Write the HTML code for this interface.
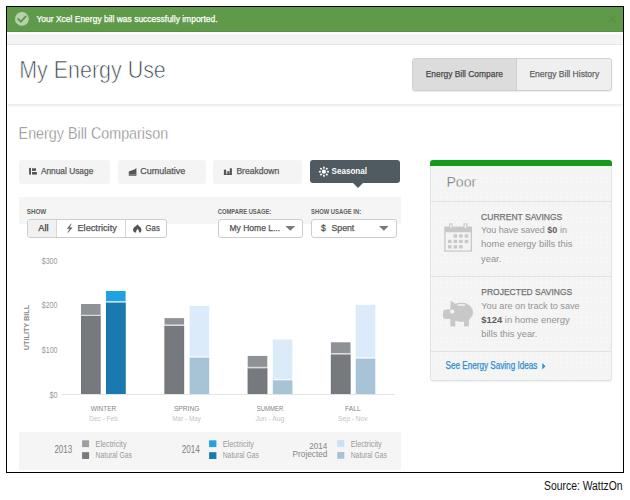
<!DOCTYPE html>
<html><head><meta charset="utf-8"><style>
html,body{margin:0;padding:0;background:#fff;}
body{width:630px;height:500px;position:relative;overflow:hidden;font-family:'Liberation Sans', sans-serif;}
.a{position:absolute;box-sizing:border-box;}
svg text{font-family:'Liberation Sans', sans-serif;}
</style></head><body>
<div class="a" style="left:6px;top:6px;width:618px;height:467px;border:1px solid #000;"></div>
<div class="a" style="left:7px;top:7px;width:616px;height:25px;background:#5f9a4b;"></div>
<svg class="a" style="left:0;top:0;" width="630" height="40">
 <circle cx="21.9" cy="18.9" r="6.9" fill="rgba(255,255,255,0.55)"/>
 <path d="M18.3 19.2 L20.9 21.7 L25.6 16.6" fill="none" stroke="#5f9a4b" stroke-width="1.9" stroke-linecap="square"/>
 <path d="M609.3 15.5 L615.8 22.2 M615.8 15.5 L609.3 22.2" stroke="#58924a" stroke-width="1.5"/>
</svg>
<div class="a" style="left:7px;top:31px;width:616px;height:1px;background:#578f44;"></div>
<div class="a" style="left:7px;top:34px;width:616px;height:11px;background:#f4f4f4;border-bottom:1px solid #e6e6e6;"></div>
<div class="a" style="left:8px;top:104px;width:614px;height:1px;background:#eaeded;"></div>
<div class="a" style="left:8px;top:105px;width:614px;height:2px;background:#f6f6f6;"></div>
<!-- tab group -->
<div class="a" style="left:412px;top:58px;width:200px;height:33px;border:1px solid #d0d0d0;border-radius:3px;background:#efefef;overflow:hidden;box-shadow:0 1px 1px rgba(0,0,0,0.08);">
  <div class="a" style="left:0;top:0;width:104px;height:31px;background:#dcdcdc;border-right:1px solid #cfcfcf;"></div>
</div>
<!-- tab buttons -->
<div class="a" style="left:19px;top:160px;width:91px;height:24px;background:#f4f4f4;border-radius:3px;"></div>
<div class="a" style="left:118px;top:160px;width:88px;height:24px;background:#f4f4f4;border-radius:3px;"></div>
<div class="a" style="left:213px;top:160px;width:89px;height:24px;background:#f4f4f4;border-radius:3px;"></div>
<div class="a" style="left:310px;top:160px;width:90px;height:23px;background:#4f5a61;border-radius:3px;"></div>
<div class="a" style="left:352.6px;top:183px;width:0;height:0;border-left:5px solid transparent;border-right:5px solid transparent;border-top:5px solid #4f5a61;"></div>
<svg class="a" style="left:0;top:0;" width="420" height="200">
 <g fill="#555">
  <rect x="29.1" y="167.9" width="1.9" height="6.7"/>
  <rect x="32" y="168.3" width="4" height="2.6"/>
  <rect x="32" y="172" width="4.9" height="2.6"/>
  <path d="M128.8 175.8 V171.6 C130 170.8 131.5 170.5 133 170 C134.3 169.5 135.3 168.8 136.4 167.9 V175.8 Z"/>
  <rect x="223.9" y="169.7" width="2.3" height="5.2"/>
  <rect x="227.3" y="171.2" width="2.2" height="3.7"/>
  <rect x="229.8" y="168.3" width="2.1" height="6.6"/>
  <rect x="223.9" y="173.8" width="8" height="1.1"/>
 </g>
 <rect x="128.8" y="174" width="7.6" height="0.6" fill="#999"/>
 <g fill="#fff">
  <circle cx="323.9" cy="171.7" r="2.1"/>
  <g transform="translate(323.9 171.7)"><rect x="-0.85" y="-5" width="1.7" height="1.9" transform="rotate(0)"/><rect x="-0.85" y="-5" width="1.7" height="1.9" transform="rotate(45)"/><rect x="-0.85" y="-5" width="1.7" height="1.9" transform="rotate(90)"/><rect x="-0.85" y="-5" width="1.7" height="1.9" transform="rotate(135)"/><rect x="-0.85" y="-5" width="1.7" height="1.9" transform="rotate(180)"/><rect x="-0.85" y="-5" width="1.7" height="1.9" transform="rotate(225)"/><rect x="-0.85" y="-5" width="1.7" height="1.9" transform="rotate(270)"/><rect x="-0.85" y="-5" width="1.7" height="1.9" transform="rotate(315)"/></g>
 </g>
</svg>
<!-- filter panel -->
<div class="a" style="left:19px;top:197px;width:382px;height:27px;background:#f5f5f5;"></div>
<div class="a" style="left:27px;top:219px;width:140px;height:19px;border:1px solid #cdcdcd;border-radius:3px;background:#fff;overflow:hidden;">
  <div class="a" style="left:0;top:0;width:29px;height:17px;background:#f1f1f1;border-right:1px solid #d6d6d6;"></div>
  <div class="a" style="left:96.5px;top:0;width:1px;height:17px;background:#d6d6d6;"></div>
</div>
<div class="a" style="left:218px;top:219px;width:85px;height:19px;border:1px solid #cdcdcd;border-radius:3px;background:#fff;"></div>
<div class="a" style="left:311px;top:219px;width:86px;height:19px;border:1px solid #cdcdcd;border-radius:3px;background:#fff;"></div>
<svg class="a" style="left:0;top:215px;" width="420" height="25">
 <path d="M285.4 11 H295.2 L290.3 15.7 Z M379 11 H388.6 L383.8 15.7 Z" fill="#7a7a7a"/>
 <path d="M71.2 223.8 L67.3 228.6 L70 228.6 L67.9 232.6 L72.1 227.8 L69.4 227.8 Z" transform="translate(0 -215)" fill="#555" stroke="#555" stroke-width="0.4" stroke-linejoin="round"/>
 <path d="M137.3 224.1 C137.5 226 133.1 226.8 133.1 229.9 C133.1 231.2 133.8 232 134.9 232.4 L136.2 232.4 C136 231.1 136.5 229.9 137.6 228.9 C138.7 229.9 139.2 231.1 139 232.4 L140.1 232.4 C141 231.9 141.4 231.1 141.4 229.9 C141.4 227.2 138.4 226.3 137.3 224.1 Z" transform="translate(0 -215)" fill="#555"/>
</svg>
<!-- chart -->
<div class="a" style="left:62px;top:394px;width:333px;height:1px;background:#e3e3e3;"></div>
<svg class="a" style="left:0;top:0;" width="420" height="400">
<rect x="81" y="304" width="19.6" height="10.9" fill="#8e9196"/>
<rect x="81" y="314.9" width="19.6" height="1.1" fill="#d9dadb"/>
<rect x="81" y="316.0" width="19.6" height="78.0" fill="#76797e"/>
<rect x="81" y="316.0" width="0.8" height="78.0" fill="#6f7277" opacity="0.6"/>
<rect x="99.8" y="316.0" width="0.8" height="78.0" fill="#6f7277" opacity="0.6"/>
<rect x="106" y="291" width="19.6" height="10.2" fill="#1fa2e2"/>
<rect x="106" y="301.2" width="19.6" height="1.4" fill="#c2def0"/>
<rect x="106" y="302.6" width="19.6" height="91.4" fill="#1a79b0"/>
<rect x="106" y="302.6" width="0.8" height="91.4" fill="#176ea1" opacity="0.6"/>
<rect x="124.8" y="302.6" width="0.8" height="91.4" fill="#176ea1" opacity="0.6"/>
<rect x="164.5" y="318.1" width="19.6" height="6.6" fill="#8e9196"/>
<rect x="164.5" y="324.7" width="19.6" height="1.3" fill="#d9dadb"/>
<rect x="164.5" y="326.0" width="19.6" height="68.0" fill="#76797e"/>
<rect x="164.5" y="326.0" width="0.8" height="68.0" fill="#6f7277" opacity="0.6"/>
<rect x="183.3" y="326.0" width="0.8" height="68.0" fill="#6f7277" opacity="0.6"/>
<rect x="189.6" y="305.9" width="19.6" height="50.5" fill="#dcebfa"/>
<rect x="189.6" y="356.4" width="19.6" height="1.2" fill="#f4f8fb"/>
<rect x="189.6" y="357.6" width="19.6" height="36.4" fill="#a6c4d6"/>
<rect x="247.7" y="355.9" width="19.6" height="11.0" fill="#8e9196"/>
<rect x="247.7" y="366.9" width="19.6" height="1.4" fill="#d9dadb"/>
<rect x="247.7" y="368.3" width="19.6" height="25.7" fill="#76797e"/>
<rect x="247.7" y="368.3" width="0.8" height="25.7" fill="#6f7277" opacity="0.6"/>
<rect x="266.5" y="368.3" width="0.8" height="25.7" fill="#6f7277" opacity="0.6"/>
<rect x="272.8" y="339.5" width="19.6" height="39.6" fill="#dcebfa"/>
<rect x="272.8" y="379.1" width="19.6" height="1.2" fill="#f4f8fb"/>
<rect x="272.8" y="380.3" width="19.6" height="13.7" fill="#a6c4d6"/>
<rect x="330.9" y="342.3" width="19.6" height="10.9" fill="#8e9196"/>
<rect x="330.9" y="353.2" width="19.6" height="1.3" fill="#d9dadb"/>
<rect x="330.9" y="354.5" width="19.6" height="39.5" fill="#76797e"/>
<rect x="330.9" y="354.5" width="0.8" height="39.5" fill="#6f7277" opacity="0.6"/>
<rect x="349.7" y="354.5" width="0.8" height="39.5" fill="#6f7277" opacity="0.6"/>
<rect x="355.7" y="304.9" width="19.6" height="52.5" fill="#dcebfa"/>
<rect x="355.7" y="357.4" width="19.6" height="1.2" fill="#f4f8fb"/>
<rect x="355.7" y="358.6" width="19.6" height="35.4" fill="#a6c4d6"/>
</svg>

<!-- legend -->
<div class="a" style="left:19px;top:432px;width:382px;height:38px;background:#f5f5f5;"></div>
<svg class="a" style="left:0;top:430px;" width="420" height="40">
 <rect x="82.1" y="10.3" width="7" height="6.8" fill="#9a9da1"/>
 <rect x="82.1" y="22.2" width="7" height="6.8" fill="#76797e"/>
 <rect x="209.1" y="10.3" width="7.3" height="6.8" fill="#1fa2e2"/>
 <rect x="209.1" y="22.2" width="7.3" height="6.8" fill="#1a79b0"/>
 <rect x="337.2" y="10.1" width="7.1" height="6.8" fill="#c9e2f5"/>
 <rect x="337.2" y="22" width="7.1" height="6.8" fill="#a6c4d6"/>
</svg>
<!-- sidebar -->
<div class="a" style="left:430px;top:160px;width:182px;height:221px;background:#f4f4f4;border:1px solid #e2e2e2;border-radius:3px;box-shadow:0 1px 1px rgba(0,0,0,0.06);"></div>
<div class="a" style="left:430px;top:160px;width:182px;height:5.5px;background:#169a1c;border-radius:3px 3px 0 0;"></div>
<div class="a" style="left:431px;top:201px;width:180px;height:1px;background:#e3e3e3;"></div>
<div class="a" style="left:431px;top:275.5px;width:180px;height:1px;background:#e3e3e3;"></div>
<div class="a" style="left:431px;top:351px;width:180px;height:1px;background:#e3e3e3;"></div>
<svg class="a" style="left:0;top:0;" width="630" height="500">
 <defs><pattern id="dots" x="0" y="0" width="5" height="5" patternUnits="userSpaceOnUse"><rect x="1" y="2" width="1" height="1" fill="#fff" opacity="0.85"/></pattern></defs>
 <rect x="431" y="166" width="180" height="214" fill="url(#dots)"/>
</svg>
<svg class="a" style="left:430px;top:200px;" width="182" height="180">
 <g fill="#c8c8c8">
  <rect x="14.3" y="26.6" width="27.7" height="25.1"/>
  <rect x="19.2" y="23.4" width="3.4" height="5"/>
  <rect x="33.4" y="23.4" width="4.1" height="5"/>
 </g>
 <rect x="15.6" y="32.3" width="25.1" height="18.2" fill="#f4f4f4"/>
 <rect x="20.2" y="24.4" width="1.4" height="3.5" fill="#f4f4f4"/>
 <rect x="34.6" y="24.4" width="1.6" height="3.5" fill="#f4f4f4"/>
 <g fill="#c8c8c8">
  <rect x="23.6" y="34.3" width="3.6" height="3.3"/><rect x="29.1" y="34.3" width="3.6" height="3.3"/><rect x="34.7" y="34.3" width="3.6" height="3.3"/><rect x="18.0" y="39.8" width="3.6" height="3.3"/><rect x="23.6" y="39.8" width="3.6" height="3.3"/><rect x="29.1" y="39.8" width="3.6" height="3.3"/><rect x="34.7" y="39.8" width="3.6" height="3.3"/><rect x="18.0" y="45.2" width="3.6" height="3.3"/><rect x="23.6" y="45.2" width="3.6" height="3.3"/><rect x="29.1" y="45.2" width="3.6" height="3.3"/>
 </g>
 <g fill="#c8c8c8">
  <path d="M20.2 109.5 L20.9 100.8 L26.6 104.6 Z"/>
  <ellipse cx="31.3" cy="112.3" rx="11.7" ry="9.7"/>
  <rect x="13" y="109.6" width="10" height="9.4" rx="3"/>
  <path d="M20.4 117 H25.3 V125.4 Q25.3 126.4 24.3 126.4 H21.4 Q20.4 126.4 20.4 125.4 Z"/>
  <path d="M34 117 H38.9 V125.4 Q38.9 126.4 37.9 126.4 H35 Q34 126.4 34 125.4 Z"/>
 </g>
 <circle cx="22.2" cy="111.6" r="2.1" fill="#f4f4f4"/>
 <path d="M27.6 105.3 Q31.2 104.1 35 105.3" stroke="#f4f4f4" stroke-width="1.5" fill="none"/>
 <path d="M112.3 163 L115.5 166.2 L112.3 169.4 Z" fill="#2a8fcf"/>
</svg>

<svg class="a" style="left:0;top:0" width="630" height="500">
<text x="36.4" y="22" font-size="9.3" stroke="#ffffff" stroke-width="0.25" fill="#ffffff" textLength="181.2" lengthAdjust="spacingAndGlyphs">Your Xcel Energy bill was successfully imported.</text>
<text x="19.2" y="78" font-size="24.3" stroke="#fff" stroke-width="0.7" fill="#3a444c" textLength="146.6" lengthAdjust="spacingAndGlyphs">My Energy Use</text>
<text x="425.7" y="77" font-size="9.4" stroke="#474747" stroke-width="0.25" fill="#474747" textLength="77.2" lengthAdjust="spacingAndGlyphs">Energy Bill Compare</text>
<text x="529.4" y="77" font-size="9.4" stroke="#5f6469" stroke-width="0.25" fill="#5f6469" textLength="69.8" lengthAdjust="spacingAndGlyphs">Energy Bill History</text>
<text x="18.6" y="139" font-size="16.8" stroke="#fff" stroke-width="0.45" fill="#777777" textLength="149.5" lengthAdjust="spacingAndGlyphs">Energy Bill Comparison</text>
<text x="40.9" y="174" font-size="8.2" stroke="#5a5a5a" stroke-width="0.25" fill="#5a5a5a" textLength="52.4" lengthAdjust="spacingAndGlyphs">Annual Usage</text>
<text x="140.2" y="174" font-size="8.2" stroke="#5a5a5a" stroke-width="0.25" fill="#5a5a5a" textLength="45.1" lengthAdjust="spacingAndGlyphs">Cumulative</text>
<text x="236.4" y="174" font-size="8.2" stroke="#5a5a5a" stroke-width="0.25" fill="#5a5a5a" textLength="42.9" lengthAdjust="spacingAndGlyphs">Breakdown</text>
<text x="331.5" y="174" font-size="8.2" font-weight="700" fill="#fff" textLength="35.5" lengthAdjust="spacingAndGlyphs">Seasonal</text>
<text x="26.7" y="214" font-size="7" font-weight="700" fill="#5f5f5f" textLength="19.6" lengthAdjust="spacingAndGlyphs">SHOW</text>
<text x="217.7" y="214" font-size="7" font-weight="700" fill="#5f5f5f" textLength="53.6" lengthAdjust="spacingAndGlyphs">COMPARE USAGE:</text>
<text x="311.0" y="214" font-size="7" font-weight="700" fill="#5f5f5f" textLength="50.1" lengthAdjust="spacingAndGlyphs">SHOW USAGE IN:</text>
<text x="38.3" y="231" font-size="8.6" stroke="#444" stroke-width="0.25" fill="#444" textLength="10.3" lengthAdjust="spacingAndGlyphs">All</text>
<text x="77.5" y="231" font-size="8.6" stroke="#555" stroke-width="0.25" fill="#555" textLength="39.3" lengthAdjust="spacingAndGlyphs">Electricity</text>
<text x="145.5" y="231" font-size="8.6" stroke="#555" stroke-width="0.25" fill="#555" textLength="14.3" lengthAdjust="spacingAndGlyphs">Gas</text>
<text x="229.5" y="231" font-size="8.6" stroke="#555" stroke-width="0.25" fill="#555" textLength="50.6" lengthAdjust="spacingAndGlyphs">My Home L...</text>
<text x="321.0" y="231" font-size="8.6" stroke="#555" stroke-width="0.25" fill="#555">$</text>
<text x="331.5" y="231" font-size="8.6" stroke="#555" stroke-width="0.25" fill="#555" textLength="22.8" lengthAdjust="spacingAndGlyphs">Spent</text>
<text x="41.8" y="264" font-size="8.2" fill="#999" textLength="15.6" lengthAdjust="spacingAndGlyphs">$300</text>
<text x="41.8" y="308" font-size="8.2" fill="#999" textLength="15.6" lengthAdjust="spacingAndGlyphs">$200</text>
<text x="41.7" y="353" font-size="8.2" fill="#999" textLength="15.9" lengthAdjust="spacingAndGlyphs">$100</text>
<text x="49.4" y="398" font-size="8.2" fill="#999" textLength="8.2" lengthAdjust="spacingAndGlyphs">$0</text>
<text x="90.7" y="411" font-size="8.0" fill="#858585" textLength="25.6" lengthAdjust="spacingAndGlyphs">WINTER</text>
<text x="89.2" y="421" font-size="7.6" fill="#c4c4c4" textLength="28.7" lengthAdjust="spacingAndGlyphs">Dec - Feb</text>
<text x="173.9" y="411" font-size="8.0" fill="#858585" textLength="25.6" lengthAdjust="spacingAndGlyphs">SPRING</text>
<text x="172.3" y="421" font-size="7.6" fill="#c4c4c4" textLength="28.7" lengthAdjust="spacingAndGlyphs">Mar - May</text>
<text x="256.7" y="411" font-size="8.0" fill="#858585" textLength="26.6" lengthAdjust="spacingAndGlyphs">SUMMER</text>
<text x="255.6" y="421" font-size="7.6" fill="#c4c4c4" textLength="28.7" lengthAdjust="spacingAndGlyphs">Jun - Aug</text>
<text x="345.0" y="411" font-size="8.0" fill="#858585" textLength="15.6" lengthAdjust="spacingAndGlyphs">FALL</text>
<text x="338.0" y="421" font-size="7.6" fill="#c4c4c4" textLength="29.6" lengthAdjust="spacingAndGlyphs">Sep - Nov</text>
<text x="54.4" y="453" font-size="10" fill="#808080" textLength="17.8" lengthAdjust="spacingAndGlyphs">2013</text>
<text x="95.6" y="447" font-size="8.2" fill="#999" textLength="30.9" lengthAdjust="spacingAndGlyphs">Electricity</text>
<text x="95.6" y="458" font-size="8.2" fill="#999" textLength="36.3" lengthAdjust="spacingAndGlyphs">Natural Gas</text>
<text x="181.8" y="453" font-size="10" fill="#808080" textLength="18.1" lengthAdjust="spacingAndGlyphs">2014</text>
<text x="222.7" y="447" font-size="8.2" fill="#999" textLength="31.2" lengthAdjust="spacingAndGlyphs">Electricity</text>
<text x="222.7" y="458" font-size="8.2" fill="#999" textLength="36.3" lengthAdjust="spacingAndGlyphs">Natural Gas</text>
<text x="309.3" y="448.6" font-size="9.2" fill="#858585" textLength="18.1" lengthAdjust="spacingAndGlyphs">2014</text>
<text x="292.6" y="457" font-size="9" fill="#858585" textLength="34.8" lengthAdjust="spacingAndGlyphs">Projected</text>
<text x="350.7" y="447" font-size="8.2" fill="#999" textLength="31.0" lengthAdjust="spacingAndGlyphs">Electricity</text>
<text x="350.7" y="458" font-size="8.2" fill="#999" textLength="36.3" lengthAdjust="spacingAndGlyphs">Natural Gas</text>
<text x="446.4" y="187" font-size="14.2" stroke="#f4f4f4" stroke-width="0.45" fill="#5a5a5a" textLength="29.8" lengthAdjust="spacingAndGlyphs">Poor</text>
<text x="481.1" y="220" font-size="9.2" stroke="#727272" stroke-width="0.25" fill="#727272" textLength="81.2" lengthAdjust="spacingAndGlyphs">CURRENT SAVINGS</text>
<text x="481.1" y="233" font-size="9.3" fill="#929292" textLength="85.8" lengthAdjust="spacingAndGlyphs">You have saved <tspan font-weight="700" fill="#606060">$0</tspan> in</text>
<text x="481.1" y="247" font-size="9.3" fill="#929292" textLength="91.5" lengthAdjust="spacingAndGlyphs">home energy bills this</text>
<text x="481.1" y="262" font-size="9.3" fill="#929292">year.</text>
<text x="481.3" y="295" font-size="9.2" stroke="#727272" stroke-width="0.25" fill="#727272" textLength="90.9" lengthAdjust="spacingAndGlyphs">PROJECTED SAVINGS</text>
<text x="481.3" y="309" font-size="9.3" fill="#929292" textLength="98.4" lengthAdjust="spacingAndGlyphs">You are on track to save</text>
<text x="481.3" y="323" font-size="9.3" fill="#929292" textLength="88.4" lengthAdjust="spacingAndGlyphs"><tspan font-weight="700" fill="#606060">$124</tspan> in home energy</text>
<text x="481.3" y="337" font-size="9.3" fill="#929292" textLength="56.0" lengthAdjust="spacingAndGlyphs">bills this year.</text>
<text x="445.6" y="369" font-size="10" stroke="#2a8fcf" stroke-width="0.25" fill="#2a8fcf" textLength="91.7" lengthAdjust="spacingAndGlyphs">See Energy Saving Ideas</text>
<text x="544.1" y="490" font-size="12" fill="#111" textLength="78.4" lengthAdjust="spacingAndGlyphs">Source: WattzOn</text>
<text transform="translate(29.3 327.5) rotate(-90)" text-anchor="middle" font-size="7.4" font-weight="700" fill="#8a8a8a" textLength="45.5" lengthAdjust="spacingAndGlyphs">UTILITY BILL</text>
</svg>
</body></html>
